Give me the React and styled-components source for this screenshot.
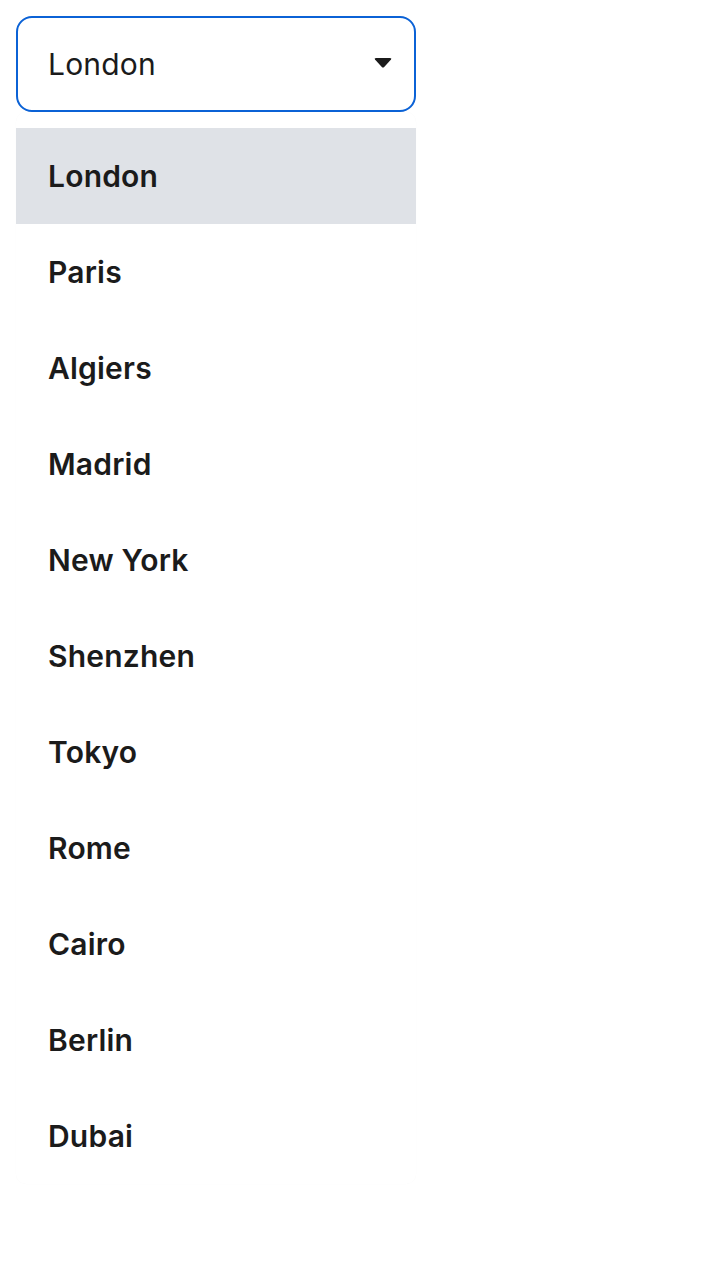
import React, { useState } from 'react'
import styled, { createGlobalStyle } from 'styled-components'

const GlobalStyle = createGlobalStyle`
  body {
    margin: 0;
    background: #ffffff;
    font-family: Inter, "Noto Sans", sans-serif;
    color: #1b1b1b;
  }
`

const Wrapper = styled.div`
  padding: 16px;
  width: 400px;
`

const SelectBox = styled.div`
  box-sizing: border-box;
  height: 96px;
  border: 2px solid #0b62d6;
  border-radius: 16px;
  display: flex;
  align-items: center;
  justify-content: space-between;
  padding: 0 22px 0 30px;
  font-size: 30px;
  font-weight: 400;
  letter-spacing: 0.2px;
  color: #1b1b1b;
`

const Caret = styled.svg`
  width: 18px;
  height: 12px;
  margin-top: -2px;
`

const Menu = styled.ul`
  list-style: none;
  margin: 0;
  padding: 16px 0 0;
  border-radius: 10px;
  box-shadow: 0 0 1px rgba(0, 0, 0, 0.04);
`

const Option = styled.li`
  height: 96px;
  display: flex;
  align-items: center;
  padding-left: 32px;
  font-size: 30px;
  font-weight: 600;
  letter-spacing: 0.2px;
  background: ${p => (p.$active ? '#dfe2e7' : 'transparent')};
`

const cities = ['London', 'Paris', 'Algiers', 'Madrid', 'New York', 'Shenzhen', 'Tokyo', 'Rome', 'Cairo', 'Berlin', 'Dubai']

const App = () => {
  const [value] = useState('London')

  return (
    <Wrapper>
      <GlobalStyle />
      <SelectBox>
        {value}
        <Caret viewBox="0 0 18 12">
          <path d="M1 2.5 Q0 1 2 1 H16 Q18 1 17 2.5 L10.2 10 Q9 11.2 7.8 10 Z" fill="#1b1b1b" />
        </Caret>
      </SelectBox>
      <Menu>
        {cities.map(c => (
          <Option key={c} $active={c === value}>{c}</Option>
        ))}
      </Menu>
    </Wrapper>
  )
}

export default App
